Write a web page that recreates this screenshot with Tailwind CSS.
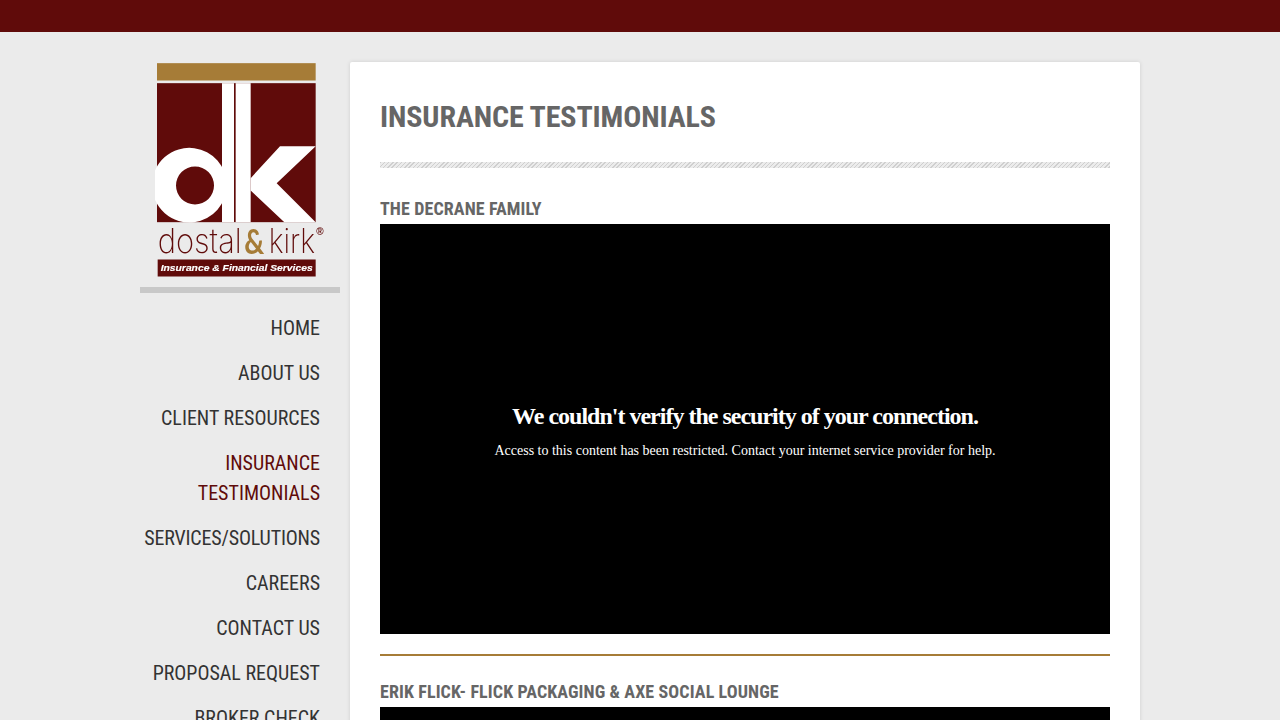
<!DOCTYPE html>
<html lang="en">
<head>
    <meta charset="UTF-8">
    <meta name="viewport" content="width=device-width, initial-scale=1.0">
    <title>Insurance Testimonials</title>
    <script src="https://cdn.jsdelivr.net/npm/@tailwindcss/browser@4"></script>
</head>
<body class="bg-[#ebebeb] h-[720px] overflow-hidden font-['Roboto',sans-serif]">

    <div class="h-8 bg-[#600b0a]"></div>

    <div class="w-[1000px] mx-auto mt-[30px] flex gap-[10px] items-start">

        <!-- sidebar -->
        <div class="w-[200px] shrink-0">
            <svg class="block ml-[15px] w-[170px] h-[217px] blur-[0.3px]" viewBox="75 35 510 650">
                <rect x="81" y="38" width="476" height="52" fill="#a67c37"/>
                <rect x="81" y="98" width="476" height="417" fill="#600b0a"/>
                <path d="M193 293a112 112 0 1 0 0 222a112 112 0 0 0 0-222zM195 348a57 57 0 1 1 0 114a57 57 0 0 1 0-114z" fill="#fff" fill-rule="evenodd"/>
                <rect x="276" y="98" width="36" height="417" fill="#fff"/>
                <rect x="317" y="98" width="45" height="417" fill="#fff"/>
                <polygon points="362,383 450,287 557,287 440,398 557,515 463,515 362,420" fill="#fff"/>
                <text x="83" y="607" font-family="Inter, sans-serif" font-weight="200" font-size="100" fill="#600b0a" textLength="252" lengthAdjust="spacingAndGlyphs">dostal</text>
                <text x="343" y="609" font-family="Lato, sans-serif" font-weight="700" font-size="102" fill="#a67c37" textLength="60" lengthAdjust="spacingAndGlyphs">&amp;</text>
                <text x="416" y="607" font-family="Inter, sans-serif" font-weight="200" font-size="100" fill="#600b0a" textLength="139" lengthAdjust="spacingAndGlyphs">kirk</text>
                <text x="559" y="553" font-family="Liberation Sans, sans-serif" font-weight="700" font-size="30" fill="#600b0a">®</text>
                <rect x="83" y="627" width="474" height="51" fill="#600b0a"/>
                <text x="92" y="661" font-family="Liberation Sans, sans-serif" font-weight="700" font-style="italic" font-size="29" fill="#fff" stroke="#fff" stroke-width="0.5" textLength="456" lengthAdjust="spacingAndGlyphs">Insurance &amp; Financial Services</text>
            </svg>
            <div class="h-[6px] mt-[8px] bg-[#c8c8c8]"></div>
            <nav class="mt-[20px] pr-5 flex flex-col gap-[15px] text-right text-[20px] leading-[30px] text-[#333] [font-stretch:75%]">
                <a>HOME</a>
                <a>ABOUT US</a>
                <a>CLIENT RESOURCES</a>
                <a class="text-[#600b0a]">INSURANCE<br>TESTIMONIALS</a>
                <a class="tracking-[-0.17px]">SERVICES/SOLUTIONS</a>
                <a>CAREERS</a>
                <a>CONTACT US</a>
                <a>PROPOSAL REQUEST</a>
                <a>BROKER CHECK</a>
            </nav>
        </div>

        <!-- main card -->
        <div class="w-[790px] bg-white p-[30px] rounded-[2px] shadow-[0_0_4px_rgba(0,0,0,0.12)] text-[#666] [font-stretch:75%]">
            <h1 class="text-[30px] leading-[50px] font-bold tracking-[-0.1px]">INSURANCE TESTIMONIALS</h1>
            <div class="h-[6px] mt-[20px] bg-[repeating-linear-gradient(135deg,#cfcfcf_0,#cfcfcf_1px,#ececec_1px,#ececec_3px)]"></div>

            <h2 class="mt-[28px] mb-[2px] text-[18px] leading-[26px] font-bold tracking-[0.1px]">THE DECRANE FAMILY</h2>
            <div class="h-[410px] pt-[4px] bg-black flex flex-col items-center justify-center text-white font-['Liberation_Serif',serif] [font-stretch:100%]">
                <p class="text-[24px] leading-[28px] font-bold tracking-[-1px]">We couldn't verify the security of your connection.</p>
                <p class="mt-[11px] text-[14px] leading-[20px]">Access to this content has been restricted. Contact your internet service provider for help.</p>
            </div>
            <div class="h-[2px] mt-[20px] bg-[#a67c37]"></div>

            <h2 class="mt-[23px] mb-[2px] text-[18px] leading-[26px] font-bold tracking-[0.1px]">ERIK FLICK- FLICK PACKAGING &amp; AXE SOCIAL LOUNGE</h2>
            <div class="h-[410px] bg-black"></div>
        </div>
    </div>

</body>
</html>
